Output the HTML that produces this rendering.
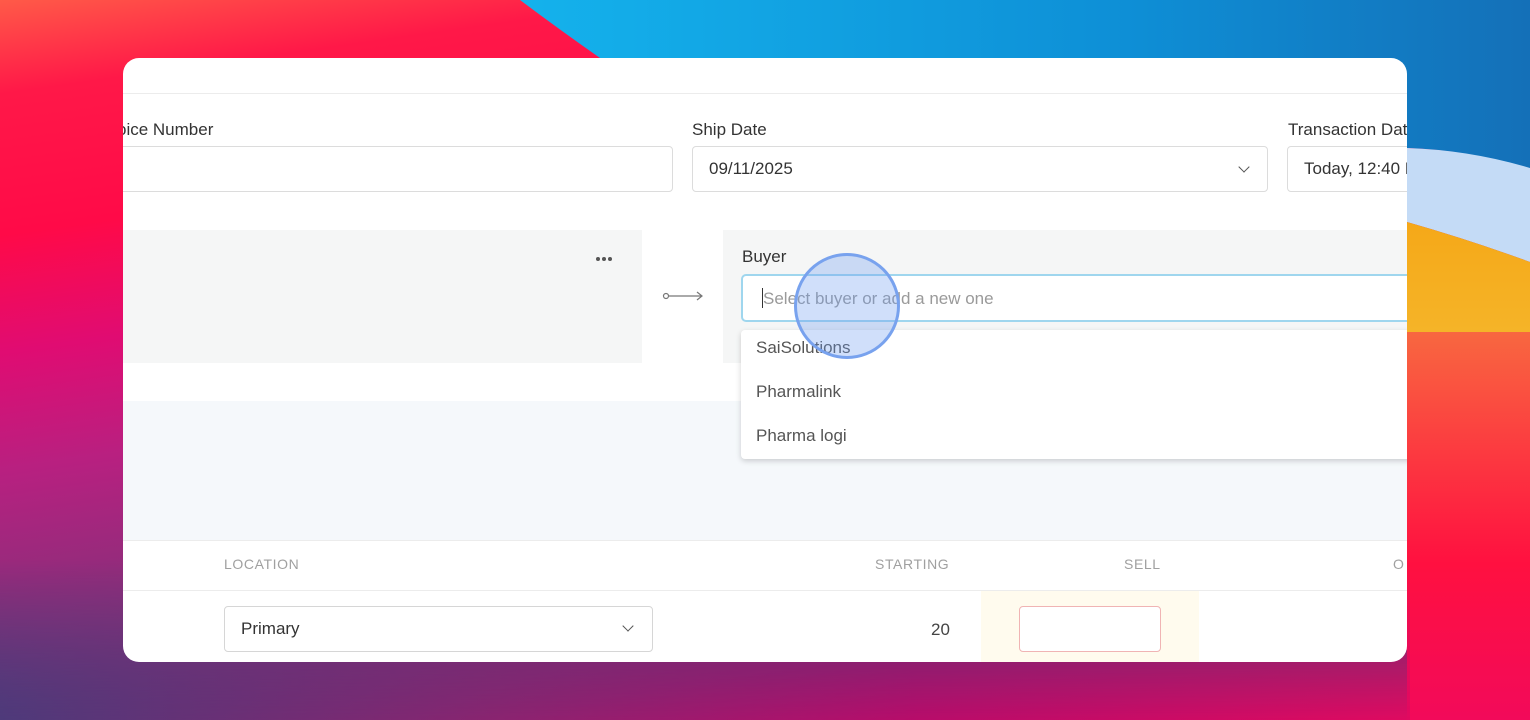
<!DOCTYPE html>
<html><head><meta charset="utf-8"><style>
*{margin:0;padding:0;box-sizing:border-box}
body{width:1530px;height:720px;overflow:hidden;position:relative;font-family:"Liberation Sans",sans-serif;background:#e0105c}
.bg{position:absolute;left:0;top:0}
.card{position:absolute;left:123px;top:58px;width:1284px;height:604px;background:#fff;border-radius:16px;overflow:hidden}
.a{position:absolute}
.lbl{font-size:17px;color:#333}
.inp{position:absolute;border:1px solid #dcdcdc;border-radius:4px;background:#fff;font-size:17px;color:#333;padding-left:16px;line-height:44px}
.chev{position:absolute;width:8px;height:8px;border-right:1.6px solid #555;border-bottom:1.6px solid #555;transform:rotate(45deg)}
.th{position:absolute;top:498px;font-size:14px;color:#a0a0a0;letter-spacing:.6px}
.it{position:absolute;left:15px;font-size:17px;color:#555}
.dot{position:absolute;width:4px;height:4px;border-radius:50%;background:#555;top:199px}
</style></head><body>
<svg class="bg" width="1530" height="720">
<defs>
<linearGradient id="gl" x1="0" y1="0" x2="0.3" y2="1"><stop offset="0" stop-color="#ff5a48"/><stop offset=".12" stop-color="#ff1848"/><stop offset=".3" stop-color="#ff0a48"/><stop offset=".45" stop-color="#e00c72"/><stop offset=".6" stop-color="#b82080"/><stop offset=".8" stop-color="#86307a"/><stop offset="1" stop-color="#4a3a78"/></linearGradient>
<linearGradient id="gb" x1="0" y1="0" x2="1" y2="0"><stop offset="0" stop-color="#4e3a7a"/><stop offset=".35" stop-color="#8a2470"/><stop offset=".65" stop-color="#b80c6a"/><stop offset="1" stop-color="#e00a60"/></linearGradient>
<linearGradient id="fade" x1="0" y1="0" x2="0" y2="1"><stop offset="0" stop-color="#fff" stop-opacity="0"/><stop offset="1" stop-color="#fff" stop-opacity="1"/></linearGradient>
<mask id="m"><rect y="560" width="1530" height="160" fill="url(#fade)"/></mask>
<linearGradient id="g2" x1="0" y1="0" x2="1" y2="0"><stop offset="0" stop-color="#14b2ec"/><stop offset=".6" stop-color="#0e8fd6"/><stop offset="1" stop-color="#1470b8"/></linearGradient>
<linearGradient id="go" x1="0" y1="0" x2="0" y2="1"><stop offset="0" stop-color="#f5a818"/><stop offset="1" stop-color="#f5b428"/></linearGradient>
<linearGradient id="gr" x1="0" y1="0" x2="0" y2="1"><stop offset="0" stop-color="#f86840"/><stop offset=".6" stop-color="#ff1040"/><stop offset="1" stop-color="#f20a5a"/></linearGradient>
</defs>
<rect width="1530" height="720" fill="url(#gl)"/>
<path d="M1300 330 L1530 330 L1530 720 L1407 720 L1407 650 L1300 650Z" fill="url(#gr)"/>
<rect y="560" width="1410" height="160" fill="url(#gb)" mask="url(#m)"/>
<path d="M520 0 L1530 0 L1530 170 Q1470 150 1407 148 L1300 148 L1300 58 L600 58 Q560 30 520 0Z" fill="url(#g2)"/>
<path d="M1300 148 L1407 148 Q1470 150 1530 168 L1530 262 Q1470 240 1407 222 L1300 222Z" fill="#c4dbf6"/>
<path d="M1300 222 L1407 222 Q1470 240 1530 262 L1530 332 L1300 332Z" fill="url(#go)"/>
</svg>
<div class="card">
<div class="a" style="left:0;top:35px;width:1284px;height:1px;background:#ececec"></div>
<div class="a lbl" style="left:-6px;top:62px">oice Number</div>
<div class="inp" style="left:-10px;top:88px;width:560px;height:46px"></div>
<div class="a lbl" style="left:569px;top:62px">Ship Date</div>
<div class="inp" style="left:569px;top:88px;width:576px;height:46px">09/11/2025</div>
<div class="chev" style="left:1117px;top:105px"></div>
<div class="a lbl" style="left:1165px;top:62px;white-space:nowrap">Transaction Date</div>
<div class="inp" style="left:1164px;top:88px;width:200px;height:46px;white-space:nowrap">Today, 12:40 PM</div>

<div class="a" style="left:0;top:172px;width:519px;height:133px;background:#f5f6f6"></div>
<div class="dot" style="left:473px"></div><div class="dot" style="left:479px"></div><div class="dot" style="left:485px"></div>
<div class="a" style="left:0;top:343px;width:1284px;height:139px;background:#f5f8fb"></div>
<svg class="a" style="left:538px;top:230px" width="44" height="16"><circle cx="5" cy="8" r="2.5" fill="none" stroke="#777" stroke-width="1.2"/><path d="M7.5 8H41M36 4l5 4-5 4" fill="none" stroke="#777" stroke-width="1.2"/></svg>
<div class="a" style="left:600px;top:172px;width:700px;height:133px;background:#f5f6f6"></div>
<div class="a lbl" style="left:619px;top:189px">Buyer</div>
<div class="a" style="left:618px;top:216px;width:700px;height:48px;border:2px solid #9fd6ee;border-radius:5px;background:#fff"></div>
<div class="a" style="left:639px;top:230px;width:1px;height:20px;background:#333"></div>
<div class="a" style="left:640px;top:231px;font-size:17px;color:#9a9a9a">Select buyer or add a new one</div>
<div class="a" style="left:618px;top:272px;width:700px;height:129px;background:#fff;border-radius:4px;box-shadow:0 2px 6px rgba(0,0,0,0.18)">
<div class="it" style="top:8px">SaiSolutions</div>
<div class="it" style="top:52px">Pharmalink</div>
<div class="it" style="top:96px">Pharma logi</div>
</div>
<div class="a" style="left:671px;top:195px;width:106px;height:106px;border-radius:50%;background:rgba(110,155,240,0.32);border:3px solid #78a2ee"></div>

<div class="a" style="left:0;top:482px;width:1284px;height:1px;background:#ececec"></div>
<div class="th" style="left:101px">LOCATION</div>
<div class="th" style="left:752px">STARTING</div>
<div class="th" style="left:1001px">SELL</div>
<div class="th" style="left:1270px">O</div>
<div class="a" style="left:0;top:532px;width:1284px;height:1px;background:#ececec"></div>
<div class="a" style="left:858px;top:533px;width:218px;height:80px;background:#fffbee"></div>
<div class="inp" style="left:101px;top:548px;width:429px;height:46px;border-color:#d6d6d6">Primary</div>
<div class="chev" style="left:501px;top:564px"></div>
<div class="a" style="left:808px;top:562px;font-size:17px;color:#444">20</div>
<div class="a" style="left:896px;top:548px;width:142px;height:46px;border:1px solid #f0b4b4;border-radius:4px;background:#fff"></div>
</div>
</body></html>
